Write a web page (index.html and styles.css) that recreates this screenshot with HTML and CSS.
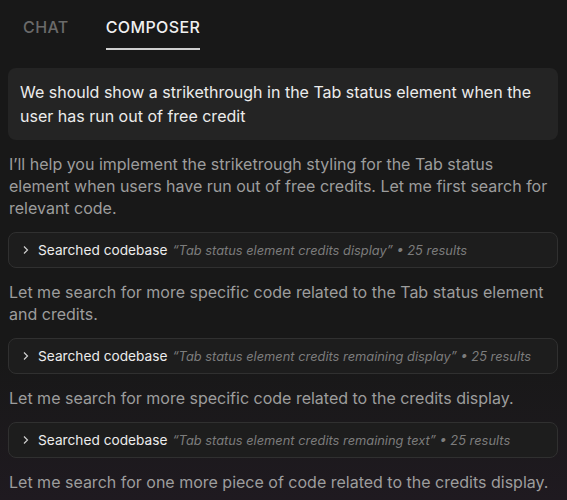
FILE: index.html
```html
<!DOCTYPE html>
<html>
<head>
<meta charset="utf-8">
<link rel="stylesheet" href="styles.css">
</head>
<body>
<div class="app">
  <nav class="tabs">
    <div class="tab">CHAT</div>
    <div class="tab active">COMPOSER</div>
  </nav>
  <div class="thread">
    <div class="user-msg">We should show a strikethrough in the Tab status element when the user has run out of free credit</div>
    <p class="reply">I’ll help you implement the striketrough styling for the Tab status element when users have run out of free credits. Let me first search for relevant code.</p>
    <div class="tool">
      <svg class="chev" width="8" height="10" viewBox="0 0 8 10"><path d="M2 1.5 L5.5 5 L2 8.5" fill="none" stroke="#cfcfcf" stroke-width="1.2"/></svg>
      <span class="tool-name">Searched codebase</span>
      <span class="tool-query">“Tab status element credits display” • 25 results</span>
    </div>
    <p class="reply">Let me search for more specific code related to the Tab status element and credits.</p>
    <div class="tool">
      <svg class="chev" width="8" height="10" viewBox="0 0 8 10"><path d="M2 1.5 L5.5 5 L2 8.5" fill="none" stroke="#cfcfcf" stroke-width="1.2"/></svg>
      <span class="tool-name">Searched codebase</span>
      <span class="tool-query">“Tab status element credits remaining display” • 25 results</span>
    </div>
    <p class="reply">Let me search for more specific code related to the credits display.</p>
    <div class="tool">
      <svg class="chev" width="8" height="10" viewBox="0 0 8 10"><path d="M2 1.5 L5.5 5 L2 8.5" fill="none" stroke="#cfcfcf" stroke-width="1.2"/></svg>
      <span class="tool-name">Searched codebase</span>
      <span class="tool-query">“Tab status element credits remaining text” • 25 results</span>
    </div>
    <p class="reply">Let me search for one more piece of code related to the credits display.</p>
  </div>
</div>
</body>
</html>
```

FILE: styles.css
```css
html, body {
  margin: 0;
  height: 100%;
}
body {
  background: linear-gradient(to bottom, #181818 0%, #181818 72%, #1f1a20 100%);
  font-family: Inter, "Noto Sans", sans-serif;
  color: #e6e6e6;
  overflow: hidden;
}
.app {
  padding: 0 9px 0 8px;
}
.tabs {
  display: flex;
  gap: 37px;
  padding-left: 15px;
  height: 50px;
}
.tab {
  font-size: 16px;
  font-weight: 500;
  letter-spacing: 0.4px;
  color: #6a6a6a;
  padding-top: 17px;
  box-sizing: border-box;
  height: 50px;
}
.tab.active {
  color: #f0f0f0;
  border-bottom: 2px solid #cfcfcf;
  height: 50px;
}
.thread {
  display: flex;
  flex-direction: column;
  gap: 13px;
  padding-top: 18px;
}
.user-msg {
  background: #242424;
  border-radius: 8px;
  padding: 12px 12px;
  font-size: 16px;
  line-height: 24px;
  color: #ececec;
}
.reply {
  margin: 0;
  padding-left: 1px;
  font-size: 16px;
  line-height: 22px;
  color: #9d9d9d;
}
.tool {
  display: flex;
  align-items: center;
  height: 36px;
  box-sizing: border-box;
  border: 1px solid #303030;
  border-radius: 8px;
  background: #1d1d1d;
  padding-left: 13px;
  font-size: 13.7px;
  white-space: nowrap;
}
.chev {
  margin-right: 8px;
}
.tool-name {
  color: #ececec;
  margin-right: 5px;
}
.tool-query {
  color: #7c7c7c;
  font-style: italic;
  font-size: 12.85px;
}
```
